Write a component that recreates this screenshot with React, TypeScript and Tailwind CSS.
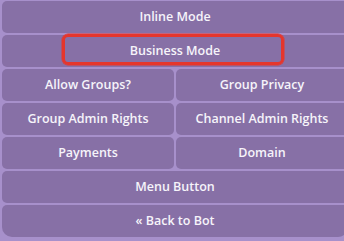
import React from 'react';

const rows: string[][] = [
  ['Inline Mode'],
  ['Business Mode'],
  ['Allow Groups?', 'Group Privacy'],
  ['Group Admin Rights', 'Channel Admin Rights'],
  ['Payments', 'Domain'],
  ['Menu Button'],
  ['« Back to Bot'],
];

const App: React.FC = () => {
  return (
    <div
      className="relative w-[344px] h-[241px] overflow-hidden bg-[#a790cb]"
      style={{ fontFamily: '"Open Sans", "Noto Sans", sans-serif' }}
    >
      <div className="w-[346px] ml-[2px] pt-[1px] flex flex-col gap-[2px]">
        {rows.map((row, i) => (
          <div key={i} className="flex gap-[2px]">
            {row.map((label) => (
              <div
                key={label}
                className={
                  'flex-1 h-[32px] flex items-center justify-center bg-[#8770a6] text-[12.5px] font-semibold text-[#f6f4fa] rounded-[5px] ' +
                  (i === rows.length - 1 ? 'rounded-bl-[10px] rounded-br-[10px]' : '')
                }
              >
                {label}
              </div>
            ))}
          </div>
        ))}
      </div>
      <div className="absolute left-[62px] top-[34px] w-[222px] h-[31px] border-[3px] border-[#e5362c] rounded-[6px] shadow-[0_0_0_0.5px_#e5362c]" />
    </div>
  );
};

export default App;
